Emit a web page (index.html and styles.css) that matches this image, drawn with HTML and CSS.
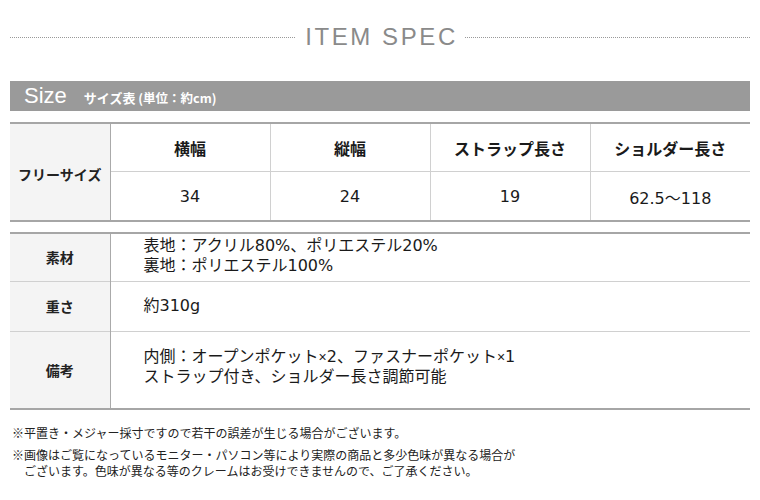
FILE: index.html
```html
<!DOCTYPE html>
<html lang="ja">
<head>
<meta charset="utf-8">
<title>ITEM SPEC</title>
<link rel="stylesheet" href="styles.css">
</head>
<body>
<div class="page">
  <div class="title">
    <span class="title-line"></span>
    <h1 class="title-text">ITEM SPEC</h1>
    <span class="title-line"></span>
  </div>

  <div class="bar">
    <span class="bar-main">Size</span>
    <span class="bar-sub">サイズ表 <small>(単位：約cm)</small></span>
  </div>

  <table class="size-table">
    <colgroup>
      <col class="col-label">
      <col class="col-val"><col class="col-val"><col class="col-val"><col class="col-val">
    </colgroup>
    <tr class="size-head">
      <th class="label" rowspan="2">フリーサイズ</th>
      <th>横幅</th>
      <th>縦幅</th>
      <th>ストラップ長さ</th>
      <th>ショルダー長さ</th>
    </tr>
    <tr class="size-data">
      <td>34</td>
      <td>24</td>
      <td>19</td>
      <td>62.5〜118</td>
    </tr>
  </table>

  <table class="spec-table">
    <colgroup>
      <col class="col-label">
      <col>
    </colgroup>
    <tr class="row-material">
      <th class="label">素材</th>
      <td>表地：アクリル80%、ポリエステル20%<br>裏地：ポリエステル100%</td>
    </tr>
    <tr class="row-weight">
      <th class="label">重さ</th>
      <td>約310g</td>
    </tr>
    <tr class="row-note">
      <th class="label">備考</th>
      <td>内側：オープンポケット<span class="times">×</span>2、ファスナーポケット<span class="times">×</span>1<br>ストラップ付き、ショルダー長さ調節可能</td>
    </tr>
  </table>

  <div class="notes">
    <p class="note">※平置き・メジャー採寸ですので若干の誤差が生じる場合がございます。</p>
    <p class="note">※画像はご覧になっているモニター・パソコン等により実際の商品と多少色味が異なる場合が<br>ございます。色味が異なる等のクレームはお受けできませんので、ご了承ください。</p>
  </div>
</div>
</body>
</html>
```

FILE: styles.css
```css
* { box-sizing: border-box; }

html, body {
  margin: 0;
  padding: 0;
  background: #fff;
}

body {
  font-family: "DejaVu Sans", "Noto Sans CJK JP", sans-serif;
  color: #1a1a1a;
}

.page {
  padding: 0 10px;
}

/* Title */
.title {
  display: flex;
  align-items: center;
  height: 24px;
  margin-top: 25px;
}

.title-line {
  flex: 1;
  height: 0;
  border-top: 1px dotted #999;
  margin-top: 1px;
}

.title-text {
  margin: 0 7px 0 10px;
  font-family: "Liberation Sans", sans-serif;
  font-weight: normal;
  font-size: 24px;
  line-height: 24px;
  letter-spacing: 2.6px;
  color: #8a8a8a;
}

/* Gray bar */
.bar {
  margin-top: 32px;
  height: 30px;
  background: #9a9a9a;
  color: #fff;
  display: flex;
  align-items: center;
  padding-left: 14px;
}

.bar-main {
  font-family: "Liberation Sans", sans-serif;
  font-size: 22px;
  line-height: 30px;
  margin-right: 17px;
}

.bar-sub {
  font-family: "Noto Sans CJK JP", sans-serif;
  font-size: 13px;
  font-weight: bold;
  margin-top: 2px;
}

.bar-sub small {
  font-size: 12.5px;
}

/* Tables */
table {
  width: 740px;
  border-collapse: collapse;
  table-layout: fixed;
}

.col-label { width: 100px; }
.col-val { width: 160px; }

th, td {
  padding: 0;
  font-weight: normal;
}

.label {
  background: #f4f4f4;
  border-right: 1px solid #aaa;
  font-family: "Noto Sans CJK JP", sans-serif;
  font-weight: bold;
  font-size: 14px;
  text-align: center;
  vertical-align: middle;
  color: #222;
}

.size-table {
  margin-top: 11px;
  border-top: 2px solid #a6a6a6;
  border-bottom: 2px solid #a6a6a6;
}

.size-table th:not(.label),
.size-table td {
  border-left: 1px solid #d0d0d0;
  text-align: center;
  vertical-align: middle;
}

.size-table .label {
  border-left: none;
  padding-top: 3px;
}

.size-head {
  height: 48px;
}

.size-head th:not(.label) {
  font-family: "Noto Sans CJK JP", sans-serif;
  font-weight: bold;
  font-size: 16px;
  color: #1a1a1a;
  padding-top: 2px;
}

.size-data {
  height: 50px;
}

.size-data td {
  border-top: 1px solid #d0d0d0;
  font-size: 16px;
  color: #1a1a1a;
  padding-top: 2px;
}

.spec-table {
  margin-top: 10px;
  border-top: 2px solid #a6a6a6;
  border-bottom: 2px solid #a6a6a6;
}

.spec-table tr + tr th,
.spec-table tr + tr td {
  border-top: 1px solid #d0d0d0;
}

.spec-table td {
  padding-left: 33px;
  font-size: 16px;
  line-height: 20px;
  color: #1a1a1a;
  vertical-align: middle;
}

.times {
  font-family: "Liberation Sans", sans-serif;
  font-size: 14px;
}

.row-material { height: 48px; }
.row-weight { height: 50px; }
.row-note { height: 78px; }

.row-material td { padding-bottom: 2px; }
.row-note td { padding-bottom: 6px; }

/* Notes */
.notes {
  margin-top: 15px;
  padding-left: 2px;
}

.note {
  margin: 0 0 6px;
  font-family: "Noto Sans CJK JP", sans-serif;
  font-size: 12px;
  line-height: 16px;
  color: #222;
  padding-left: 12px;
  text-indent: -12px;
}
```
